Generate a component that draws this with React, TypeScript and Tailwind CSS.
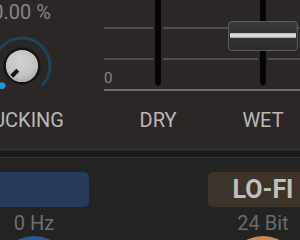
import React from "react";

function Knob({ className = "" }: { className?: string }) {
  const c = 32;
  const r = 28;
  const s = r * Math.SQRT1_2;
  const p1 = 6 * Math.SQRT1_2;
  const p2 = 14.5 * Math.SQRT1_2;
  return (
    <svg width="64" height="64" viewBox="0 0 64 64" className={className}>
      <defs>
        <radialGradient id="kf" cx="45%" cy="35%" r="65%">
          <stop offset="0%" stopColor="#d2d2d2" />
          <stop offset="70%" stopColor="#c2c2c2" />
          <stop offset="100%" stopColor="#a9a9a9" />
        </radialGradient>
      </defs>
      <path
        d={`M ${c - s} ${c + s} A ${r} ${r} 0 1 1 ${c + s} ${c + s}`}
        fill="none"
        stroke="#1c4656"
        strokeWidth="3"
      />
      <circle cx={c - s} cy={c + s} r="3.3" fill="#1b9ad6" />
      <circle cx={c} cy={c} r="17.3" fill="url(#kf)" stroke="#141414" strokeWidth="2.4" />
      <line
        x1={c - p1}
        y1={c + p1}
        x2={c - p2}
        y2={c + p2}
        stroke="#141414"
        strokeWidth="4"
      />
    </svg>
  );
}

function Track({ className = "" }: { className?: string }) {
  return (
    <div
      className={`box-border w-[10px] h-[86px] border-x-2 border-[#2a2726] bg-[#050505] rounded-b-[5px] ${className}`}
    />
  );
}

function Handle({ className = "" }: { className?: string }) {
  return (
    <div
      className={`box-border w-[70px] h-[30px] rounded-[4px] border border-[#5c5c5c] bg-linear-to-b from-[#3a3a3a] to-[#2b2b2b] flex flex-col pt-[11px] px-[1px] ${className}`}
    >
      <div className="h-[5px] bg-linear-to-b from-[#b8b8b8] via-[#e4e4e4] to-[#a6a6a6]" />
    </div>
  );
}

export default function App() {
  return (
    <div className="w-[300px] h-[240px] overflow-hidden bg-[#232323] [font-family:Roboto,'Noto_Sans',sans-serif]">
      {/* top section */}
      <div className="h-[149px] bg-[#2a2726] flex">
        <div className="ml-[-39px] w-[121px] shrink-0 flex flex-col items-center">
          <div className="mt-[2px] text-[20px] leading-[20px] text-[#858585] whitespace-nowrap">
            0.00 %
          </div>
          <Knob className="mt-[12px] shrink-0" />
          <div className="mt-[12px] text-[20px] leading-[20px] text-[#b9b9b9] whitespace-nowrap">
            DUCKING
          </div>
        </div>
        <div className="ml-[22px] w-[210px] shrink-0 flex flex-col">
          <div className="grid items-start">
            <div className="col-start-1 row-start-1 flex flex-col pt-[27px]">
              <div className="h-[2px] bg-[#4e4e4e]" />
              <div className="mt-[29px] h-[2px] bg-[#4e4e4e]" />
              <div className="mt-[11px] text-[15px] leading-[15px] text-[#8a8a8a]">0</div>
              <div className="mt-[3px] h-[2px] bg-[#6c6c6c]" />
            </div>
            <div className="col-start-1 row-start-1 flex">
              <div className="w-[108px] flex justify-center">
                <Track />
              </div>
              <div className="w-[102px] grid justify-items-center items-start">
                <Track className="col-start-1 row-start-1" />
                <Handle className="col-start-1 row-start-1 mt-[21px]" />
              </div>
            </div>
          </div>
          <div className="mt-[19px] flex text-[20px] leading-[20px] text-[#b9b9b9]">
            <div className="w-[108px] text-center">DRY</div>
            <div className="w-[102px] text-center">WET</div>
          </div>
        </div>
      </div>
      {/* separator */}
      <div className="h-[1px] bg-[#3a3837]" />
      <div className="h-[1px] bg-[#262626]" />
      <div className="h-[6px] bg-[#1b1b1b]" />
      <div className="h-[1px] bg-[#363636]" />
      {/* bottom section */}
      <div className="flex ml-[-21px] pt-[14px]">
        <div className="w-[110px] shrink-0 flex flex-col items-center">
          <div className="w-[110px] h-[35px] rounded-[5px] bg-[#263a5b]" />
          <div className="mt-[6px] text-[20px] leading-[20px] text-[#6e6e6e] whitespace-nowrap">
            0 Hz
          </div>
          <div className="mt-[3px] w-[72px] h-[72px] rounded-full bg-[#2b5891] shrink-0" />
        </div>
        <div className="w-[119px] shrink-0" />
        <div className="w-[110px] shrink-0 flex flex-col items-center">
          <div className="w-[110px] h-[35px] rounded-[5px] bg-[#3d3429] flex items-center justify-center text-[25px] leading-[25px] font-bold text-[#c0c0c0]">
            LO-FI
          </div>
          <div className="mt-[6px] text-[20px] leading-[20px] text-[#6a6a6a] whitespace-nowrap">
            24 Bit
          </div>
          <div className="mt-[3px] w-[72px] h-[72px] rounded-full bg-[#c58a56] shrink-0" />
        </div>
      </div>
    </div>
  );
}
